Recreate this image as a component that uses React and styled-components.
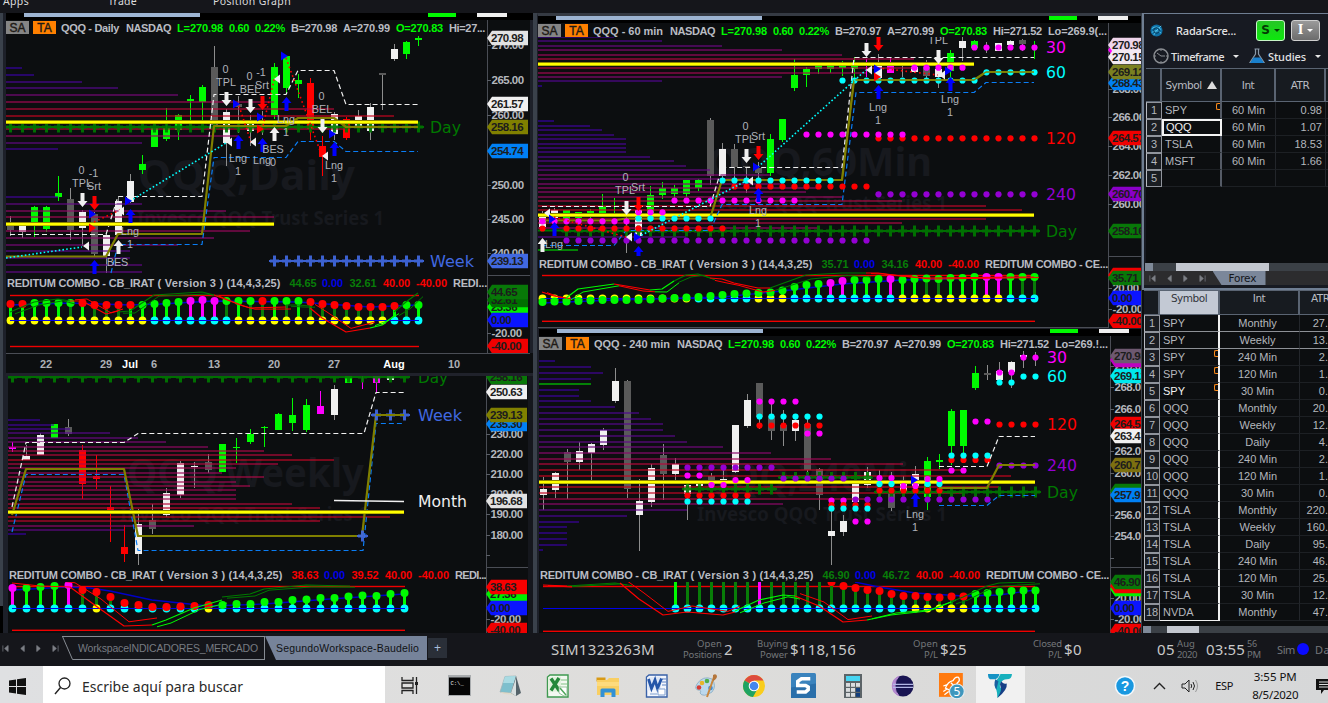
import React from "react";
import styled, { createGlobalStyle } from "styled-components";

const Global = createGlobalStyle`
  *, *::before, *::after { box-sizing: border-box; }
  html, body { margin: 0; padding: 0; background: #15161a; overflow: hidden; }
  body { font-family: "Liberation Sans", Arial, sans-serif; }
  svg { display: block; flex: none; }
`;

/* ---------- text helpers ---------- */
const SANS = '"Liberation Sans", Arial, sans-serif';
const UI = '"Noto Sans", "Open Sans", sans-serif';
const VERD = '"DejaVu Sans", Verdana, sans-serif';
const ctx = document.createElement("canvas").getContext("2d");

const FitText = styled.span`
  display: inline-block;
  flex: none;
  white-space: pre;
  width: ${(p) => (p.$w ? p.$w + "px" : "auto")};
  margin-left: ${(p) => p.$ml || 0}px;
  color: ${(p) => p.$c || "inherit"};
  font: ${(p) => p.$font};
`;
function Fit({ w, children, size = 12, weight = 400, family = SANS, c, ml }) {
  const text = String(children);
  ctx.font = `${weight} ${size}px ${family}`;
  const ls = (w - ctx.measureText(text).width) / text.length;
  return (
    <FitText $w={w} $ml={ml} $c={c} $font={`${weight} ${size}px ${family}`} style={{ letterSpacing: ls + "px" }}>
      {text}
    </FitText>
  );
}

/* ---------- palette ---------- */
const C = {
  w: "#f0f0f0", g: "#00fa00", d: "#5a5a5a", r: "#ff0000", m: "#ff00ff", c: "#00ffff",
  p: "#9400d3", y: "#ffff00", o: "#808000", b: "#0a7df5", k: "#007800", B: "#0000ff", L: "#00fa00", D: "#087d08",
  R: "#4169e1", t: "#b0b3bb",
};
const BG = "#0c0e10";

/* ---------- chart primitives ---------- */
const STOPS = [[0, 50, 0, 170], [0.3, 88, 8, 140], [0.5, 135, 8, 115], [0.75, 175, 10, 70], [1, 200, 5, 30]];
function heat(t) {
  for (let i = 1; i < STOPS.length; i++) {
    if (t <= STOPS[i][0]) {
      const a = STOPS[i - 1], b = STOPS[i], k = (t - a[0]) / (b[0] - a[0]);
      return `rgb(${[1, 2, 3].map((j) => Math.round(a[j] + (b[j] - a[j]) * k)).join(",")})`;
    }
  }
  return "rgb(200,5,30)";
}
const Profile = ({ x0, rows, max }) =>
  rows.map(([y, x, col], i) => (
    <rect key={i} x={x0} y={y - 1} width={x - x0} height={2} fill={col || heat(Math.min(1, (x - x0) / max))} opacity={0.6} />
  ));
const Candles = ({ x0, step, bars }) =>
  bars.map((b, i) => {
    const [k, o, c, h, l] = b;
    const x = x0 + step * i;
    const wick = k === "w" || k === "d" ? "#8d8d8d" : C[k];
    return (
      <g key={i}>
        <rect x={x} y={h} width={1} height={l - h} fill={wick} />
        {c > o && <rect x={x - 3} y={o} width={7} height={c - o} fill={C[k]} />}
      </g>
    );
  });
const pts = (s) => s.map((p) => p.join(",")).join(" ");
const Line = ({ p, c, w = 1, dash, o = 1 }) => (
  <polyline points={pts(p)} fill="none" stroke={C[c] || c} strokeWidth={w} strokeDasharray={dash} opacity={o} strokeLinejoin="round" />
);
const Bands = ({ white, olive, blue }) => (
  <g>
    <Line p={blue} c="b" w={1.2} dash="5 3" />
    <Line p={olive} c="o" w={2.2} />
    <Line p={white} c="w" w={1.2} dash="5 3" />
  </g>
);
const Yellow = ({ x1, x2, y }) => (
  <g>
    <rect x={x1} y={y - 2} width={x2 - x1} height={4} fill="#8f8500" />
    <rect x={x1} y={y - 1} width={x2 - x1} height={2.4} fill="#ffff00" />
  </g>
);
const Pluses = ({ x1, x2, y, c, step = 12, h = 5.5 }) => {
  const out = [];
  for (let x = x1; x <= x2; x += step) out.push(x);
  return (
    <g fill={C[c]} opacity={0.92}>
      <rect x={x1 - 5} y={y - 1} width={x2 - x1 + 11} height={2} />
      {out.map((x) => (
        <g key={x}>
          <rect x={x - 4} y={y - 1.5} width={9} height={3} />
          <rect x={x - 1} y={y - h} width={3} height={h * 2} />
        </g>
      ))}
    </g>
  );
};
const Dots = ({ rows }) =>
  rows.map(([c, y, x1, x2], k) => {
    const out = [];
    for (let x = x1; x <= (x2 || x1); x += 12) out.push(<circle key={x} cx={x + 0.5} cy={y} r={3.1} fill={C[c]} />);
    return <g key={k}>{out}</g>;
  });
const Marks = ({ items }) =>
  items.map(([k, x, y, c], i) => {
    if (k === "dn")
      return <path key={i} d={`M${x - 1.5} ${y}h4v8h3l-5 6l-5-6h3z`} fill={C[c]} />;
    if (k === "up")
      return <path key={i} d={`M${x - 1.5} ${y + 14}h4v-8h3l-5-6l-5 6h3z`} fill={C[c]} />;
    if (k === "rt") return <path key={i} d={`M${x - 3} ${y - 4.5}l7 4.5l-7 4.5z`} fill={C[c]} />;
    if (k === "lt") return <path key={i} d={`M${x + 3} ${y - 4.5}l-6 4.5l6 4.5z`} fill={C[c]} />;
    return (
      <text key={i} x={x} y={y} textAnchor="middle" fontSize={10.8} fill={C.t} fontFamily={SANS}>
        {k}
      </text>
    );
  });
const Name = ({ x, y, c, children, w }) => (
  <text x={x} y={y} fill={C[c] || c} fontFamily={VERD} fontSize={16.5} textLength={w} lengthAdjust="spacingAndGlyphs">{children}</text>
);
const Mark = ({ x, y, w, size, children }) => (
  <text x={x} y={y} textLength={w} lengthAdjust="spacingAndGlyphs" fontSize={size} fontWeight={700} fontFamily={UI} fill="#17191e">{children}</text>
);
const Combo = ({ x0, step, zero, red, tops, topC, stemC, baseC, lines, x2, from = 0, dot = 4 }) => (
  <g>
    {red.map((y) => <rect key={y} x={x0} y={y - 0.7} width={x2 - x0} height={1.4} fill="#f00000" />)}
    {tops.map((t, i) => {
      if (i < from) return null;
      const x = x0 + step * i + 0.5, k = stemC[i] || "L";
      return <rect key={i} x={x - 1.5} y={t} width={3} height={zero - t} fill={C[k]} />;
    })}
    {tops.map((t, i) => (i < from ? null : <circle key={i} cx={x0 + step * i + 0.5} cy={zero} r={3.9} fill={C[baseC[i]]} />))}
    <rect x={x0} y={zero - 0.5} width={x2 - x0} height={1} fill="#0000e8" />
    {lines.filter((l) => l[0] === "B").map((l, i) => <Line key={i} c="#0000c8" p={l[1]} w={1.3} />)}
    {tops.map((t, i) => i < from || topC[i] === "." ? null : (
      <circle key={i} cx={x0 + step * i + 0.5} cy={t} r={dot} fill={C[topC[i]]} />
    ))}
    {lines.filter((l) => l[0] !== "B").map((l, i) => (
      <g key={i}>
        <Line c={l[0]} p={l[1]} w={1.2} />
        {l[2] && <Line c={l[0]} p={l[1].map(([x, y], j) => [x + 5, y + l[2] * (j % 2 ? 1 : 0.6)])} w={1} />}
      </g>
    ))}
  </g>
);

const numW = (s) => [...s].reduce((a, ch) => a + (ch === "." ? 2.6 : ch === "-" ? 4 : 6), 0);
const AxisNum = ({ x, y, c = "#b4b7bd", children }) => (
  <text x={x} y={y + 4} fontSize={11.5} fontWeight={700} fontFamily={SANS} fill={c} textLength={numW(children)}>{children}</text>
);
const Axis = ({ x, x2, y1, y2, sep, nums, tags }) => (
  <svg width={x2 - x} height={y2 - y1} viewBox={`${x} ${y1} ${x2 - x} ${y2 - y1}`}>
    <rect x={x} y={y1} width={x2 - x} height={y2 - y1} fill={BG} />
    <rect x={x} y={y1} width={1} height={y2 - y1} fill="#4a4d55" />
    <rect x={x} y={sep} width={x2 - x} height={1} fill="#4a4d55" />
    {nums.map(([n, y]) => (
      <g key={y}>
        <rect x={x} y={y} width={4} height={1} fill="#5c6068" />
        {n && <AxisNum x={x + 4.5} y={y}>{n}</AxisNum>}
      </g>
    ))}
    {tags.map(([n, y, bg, fg = "#1c1c1c"], i) => (
      <g key={i}>
        <path d={`M${x} ${y}L${x + 5} ${y - 7.3}H${x + 41}V${y + 7.3}H${x + 5}Z`} fill={bg} />
        {n && <AxisNum x={x + 4} y={y} c={fg}>{n}</AxisNum>}
      </g>
    ))}
  </svg>
);
const Region = ({ x, x2, y1, y2, children }) => (
  <svg width={x2 - x} height={y2 - y1} viewBox={`${x} ${y1} ${x2 - x} ${y2 - y1}`}>{children}</svg>
);

/* ---------- window chrome ---------- */
const Screen = styled.div`
  width: 1328px; height: 703px; overflow: hidden; display: flex; flex-direction: column; background: #15161a;
`;
const MenuBar = styled.div`
  height: 13px; flex: none; background: #15161b; display: flex; color: #dcdcdc; overflow: hidden;
  span { margin-top: -5px; line-height: 13px; }
`;
const Desk = styled.div`height: 620px; flex: none; display: flex;`;
const Rail = styled.div`
  width: ${(p) => p.$w}px; flex: none; background: ${(p) => p.$c || "#3a414b"};
`;
const LeftEdge = styled(Rail)`
  display: flex; flex-direction: column; justify-content: flex-end; border-right: 2px solid #1d2029;
  &::after { content: ""; height: 27px; background: #000; }
`;
const Column = styled.div`
  width: ${(p) => p.$w}px; flex: none; display: flex; flex-direction: column; background: ${BG}; overflow: hidden;
`;
const ChartFrame = styled.section`
  height: ${(p) => p.$h}px; flex: none; display: flex; flex-direction: column; overflow: hidden; background: ${BG};
  border-top: ${(p) => p.$top || 0}px solid ${(p) => p.$tc || "#353a43"};
  border-left: ${(p) => p.$l}px solid #1d2029;
  border-bottom: ${(p) => p.$b || 0}px solid #20222b;
`;
const Strip = styled.div`
  height: ${(p) => p.$h}px; flex: none; background: #000; display: flex; align-items: flex-start; padding-left: 18px;
`;
const Seg = styled.i`
  width: ${(p) => p.$w}px; height: 4px; margin-left: ${(p) => p.$ml || 0}px; background: ${(p) => p.$c};
`;
const Body = styled.div`display: flex; flex: none;`;
const Stack = styled.div`width: ${(p) => p.$w}px; flex: none; display: flex; flex-direction: column;`;
const Header = styled.div`
  height: ${(p) => p.$h}px; flex: none; padding-top: 1px; display: flex; align-items: flex-start; color: #b9bcc3;
  line-height: 14px; overflow: hidden; > span { line-height: 14px; }
`;
const Flag = styled.b`
  width: 23px; height: 13px; flex: none; margin-right: 4px; background: ${(p) => p.$c}; color: #1e1a16;
  font: 400 12px/14px ${SANS}; text-align: center; -webkit-text-stroke: 0.4px #1e1a16;
`;
const StudyRow = styled.div`
  height: ${(p) => p.$h}px; flex: none; display: flex; align-items: flex-start; padding-left: 1px; color: #b9bcc3; overflow: hidden;
  > span { line-height: ${(p) => p.$lh || 14}px; }
`;
const Q = (p) => <Fit size={11} weight={700} {...p} />;

function QuoteHeader({ h, name, nameW, bid = "B=270.97", tail }) {
  return (
    <Header $h={h}>
      <Flag $c="#858585">SA</Flag>
      <Flag $c="#ff8000">TA</Flag>
      <Q w={nameW} ml={1}>{name}</Q>
      <Q w={45} ml={7}>NASDAQ</Q>
      <Q w={46} ml={6} c={C.g}>L=270.98</Q>
      <Q w={20} ml={6} c={C.g}>0.60</Q>
      <Q w={30} ml={6} c={C.g}>0.22%</Q>
      <Q w={46} ml={6}>{bid}</Q>
      <Q w={47} ml={6}>A=270.99</Q>
      <Q w={47} ml={6} c={C.g}>O=270.83</Q>
      {tail}
    </Header>
  );
}
function StudyTitle({ h, lh, a, b, ac, bc, tail, tailW }) {
  return (
    <StudyRow $h={h} $lh={lh}>
      <Q w={147}>REDITUM COMBO - CB_IRAT</Q>
      <Q w={66} ml={3.5}>( Version 3 )</Q>
      <Q w={54} ml={3}>(14,4,3,25)</Q>
      <Q w={27} ml={9} c={ac}>{a}</Q>
      <Q w={21} ml={5.5} c="#0000e8">0.00</Q>
      <Q w={27} ml={6.5} c={bc}>{b}</Q>
      <Q w={27} ml={6.5} c="#fa0000">40.00</Q>
      <Q w={31} ml={6} c="#fa0000">-40.00</Q>
      <Q w={tailW} ml={6}>{tail}</Q>
    </StudyRow>
  );
}
const TopStrip = ({ h, a, b, c }) => (
  <Strip $h={h}>
    <Seg $w={a} $c="#9db4d2" />
    <Seg $w={28} $ml={b} $c="#00fa00" />
    <Seg $w={30} $ml={c} $c="#efefef" />
  </Strip>
);

/* ---------- Daily ---------- */
const dailyBars = [
  ["d", 225, 230, 216, 236], ["w", 225, 232, 224, 238], ["g", 207, 226, 206, 237], ["g", 207, 229, 206, 232], ["g", 193, 197, 176, 201],
  ["d", 199, 230, 188, 240], ["w", 212, 228, 210, 246], ["d", 214, 254, 212, 256], ["w", 235, 256, 233, 273], ["w", 201, 235, 197, 235],
  ["w", 181, 202, 174, 203], ["g", 164, 170, 155, 174], ["g", 128, 147, 128, 147], ["g", 128, 139, 108, 141], ["g", 115, 130, 114, 140],
  ["g", 99, 101, 95, 121], ["g", 87, 102, 85, 121], ["d", 67, 125, 46, 130], ["w", 112, 143, 109, 166], ["d", 104, 107, 96, 133],
  ["w", 124, 131, 115, 146], ["d", 116, 116, 111, 135], ["g", 67, 115, 63, 119], ["g", 56, 88, 56, 93], ["g", 80, 84, 74, 98],
  ["r", 83, 129, 78, 140], ["r", 146, 157, 136, 176], ["w", 114, 134, 112, 140], ["r", 119, 138, 117, 140], ["w", 116, 126, 110, 127],
  ["w", 107, 131, 103, 140], ["d", 73, 75, 73, 110], ["w", 49, 59, 44, 61], ["g", 42, 54, 41, 59], ["g", 38, 40, 34, 46],
];
const dailyProfile = [
  [68, 22], [75, 34], [82, 82], [88, 118], [95, 178], [102, 274], [109, 334], [116, 394], [129, 346], [136, 238], [143, 142], [149, 58],
  [197, 58], [204, 142], [211, 226], [217, 274], [231, 250], [238, 214], [245, 178], [251, 130], [258, 130], [265, 142], [272, 142],
];
function Daily() {
  return (
    <ChartFrame $h={363} $l={1} $b={3}>
      <TopStrip h={7} a={176} b={228} c={21} />
      <Body>
        <Stack $w={481}>
          <QuoteHeader h={16} name="QQQ - Daily" nameW={58} bid="B=270.98" tail={<Q w={36} ml={6}>Hi=27...</Q>} />
          <Region x={6} x2={487} y1={36} y2={275}>
            <Mark x={138} y={190} w={217} size={41}>QQQ,Daily</Mark>
            <Mark x={137} y={225} w={247} size={20}>Invesco QQQ Trust Series 1</Mark>
            <Candles x0={10} step={12} bars={dailyBars} />
            <Profile x0={6} rows={dailyProfile} max={390} />
            <Pluses x1={10} x2={418} y={127} c="k" />
            <Pluses x1={274} x2={418} y={261} c="R" />
            <Bands
              white={[[10, 234.5], [106, 234.5], [118, 196.5], [202, 196.5], [214, 94.5], [286, 94.5], [298, 70.5], [334, 70.5], [346, 104.5], [419, 104.5]]}
              olive={[[6, 256.5], [106, 256.5], [118, 234], [202, 234], [214, 126], [286, 126], [298, 118], [334, 118], [346, 127], [418, 127]]}
              blue={[[111, 273], [118, 244.5], [202, 244.5], [214, 157.5], [286, 157.5], [298, 141.5], [334, 141.5], [346, 151.5], [418, 151.5]]}
            />
            <Yellow x1={6} x2={274} y={224} />
            <Yellow x1={6} x2={418} y={122} />
            <Line p={[[6, 258], [82, 247]]} c="c" w={1.6} dash="1.6 2.2" />
            <Line p={[[130, 201], [226, 143]]} c="c" w={1.6} dash="1.6 2.2" />
            {[[[94, 222], [120, 210]], [[239, 106], [251, 142]], [[262, 130], [275, 76]], [[286, 58], [322, 156]]].map((p, i) => <Line key={i} p={p} c="r" w={1.6} dash="1.6 3" />)}
            <Marks items={[
              ["dn", 226, 92, "w"], ["dn", 250, 99, "w"], ["dn", 322, 119, "w"], ["dn", 82, 193, "w"], ["dn", 262, 96, "r"], ["dn", 94, 196, "r"],
              ["up", 238, 135, "B"], ["up", 262, 138, "B"], ["up", 286, 97, "B"], ["up", 334, 142, "B"], ["up", 94, 260, "B"], ["up", 130, 209, "B"],
              ["up", 274, 127, "w"], ["up", 118, 240, "w"], ["rt", 236, 104, "B"], ["rt", 260, 117, "B"], ["rt", 92, 214, "B"], ["rt", 128, 201, "B"], ["rt", 284, 56, "B"], ["rt", 332, 134, "B"],
              ["lt", 229, 142, "w"], ["lt", 253, 142, "w"], ["lt", 277, 79, "w"], ["lt", 325, 156, "w"], ["lt", 86, 246, "w"], ["lt", 121, 211, "w"], ["rt", 260, 129, "r"], ["rt", 92, 228, "r"],
              ["0", 225.5, 73], ["TPL", 226, 86], ["0", 249.5, 80], ["-1", 261, 76], ["Srt", 262, 89], ["BEL", 250, 93], ["BES", 273, 153], ["Lng", 238, 162], ["1", 238, 175],
              ["Lng", 262, 164], ["0", 273, 166], ["Lng", 286, 123], ["1", 286, 136], ["0", 321.5, 100], ["BEL", 322, 113], ["Lng", 334, 169], ["1", 334, 182],
              ["0", 81.5, 174], ["TPL", 82, 187], ["-1", 93.5, 177], ["Srt", 94, 190], ["Lng", 130, 235], ["1", 130, 248], ["BES", 117.5, 266],
            ]} />
            <Name x={430} y={133} c="k" w={31}>Day</Name>
            <Name x={430} y={267} c="R" w={44}>Week</Name>
          </Region>
          <StudyTitle h={15} lh={16} a="44.65" b="32.61" ac="#087d08" bc="#087d08" tail="REDI..." tailW={34} />
          <Region x={6} x2={487} y1={290} y2={353}>
            <Combo x0={10} step={12} zero={320.5} red={[295.5, 346.5]} x2={419}
              tops={[304, 304, 303, 303, 303, 303, 303, 305, 305, 305, 305, 305, 304, 303, 302, 301, 300, 301, 301, 301, 301, 301, 301, 301, 301, 302, 304, 305, 306, 307, 307, 307, 306, 305, 305]}
              topC="rrggggrrrrrggggmmmgggrgggrrrrrrrrgg"
              stemC="LLLLLDLDDDLLLLLmmmDLDDLDLDDDDDDDLDL"
              baseC="yyyyyyyyyyyycccccccyyyyyyyyyyyyyccc"
              lines={[
                ["B", [[10, 305], [70, 303], [130, 305], [160, 304], [214, 301], [298, 302], [370, 307], [418, 305]]],
                ["k", [[10, 312], [34, 302], [58, 299], [70, 301]], 3], ["r", [[70, 301], [82, 301], [106, 314], [118, 311]], -2], ["k", [[118, 312], [130, 311], [154, 295], [202, 292], [214, 295]], 2],
                ["r", [[214, 295], [238, 304], [250, 308], [286, 307]], 2], ["k", [[286, 305], [298, 305], [310, 306]], 2], ["r", [[310, 308], [322, 318], [346, 332], [370, 328]], -6], ["L", [[370, 328], [382, 325], [394, 316]], -4], ["k", [[394, 312], [406, 302], [418, 293]], 6],
              ]} />
          </Region>
        </Stack>
        <Axis x={487} x2={530} y1={20} y2={353} sep={275}
          nums={[["270.00", 45], ["265.00", 80], ["260.00", 115], ["250.00", 185], ["245.00", 219], ["240.00", 253], ["-20.00", 333]]}
          tags={[["270.98", 38, "#e2e2e2"], ["261.57", 104, "#f0f0f0"], ["258.16", 127, "#808000"], ["254.74", 151, "#0080f5"], ["239.13", 261, "#4169e1"],
            ["23.36", 307, "#00f000"], ["32.61", 300, "#006f00"], ["44.65", 292, "#087808"], ["0.00", 320, "#0a14ff"], ["-40.00", 346, "#f00000"]]} />
        <Rail $w={3} $c="#1d2029" />
      </Body>
      <TimeAxis />
    </ChartFrame>
  );
}
const TimeRow = styled.div`
  height: 20px; width: 524px; border-top: 1px solid #4a4d55; display: flex; flex: none; padding-left: 28px;
`;
const Tick = styled.span`
  width: 24px; flex: none; margin-left: ${(p) => p.$ml || 0}px; text-align: center; font: 700 11px/21px ${SANS}; color: ${(p) => (p.$hot ? "#fff" : "#aeb1b7")};
`;
const TimeAxis = () => (
  <TimeRow>
    {[["22", 0], ["29", 36], ["Jul", 0, 1], ["6", 0], ["13", 36], ["20", 36], ["27", 36], ["Aug", 36, 1], ["10", 36]].map(([t, ml, hot]) => (
      <Tick key={t} $ml={ml} $hot={hot}>{t}</Tick>
    ))}
  </TimeRow>
);

/* ---------- Weekly ---------- */
const weeklyBars = [
  ["m", 447, 449, 442, 452], ["w", 456, 460, 445, 460], ["w", 435, 455, 433, 455], ["g", 424, 438, 424, 438], ["d", 427, 434, 419, 436],
  ["r", 450, 484, 445, 499], ["r", 476, 479, 455, 489], ["r", 507, 511, 486, 542], ["r", 547, 554, 525, 562], ["w", 524, 554, 509, 565],
  ["d", 520, 529, 504, 534], ["w", 493, 515, 488, 517], ["w", 463, 495, 461, 498], ["w", 466, 467, 462, 488], ["d", 462, 470, 454, 473],
  ["g", 444, 472, 444, 472], ["g", 447, 448, 438, 463], ["g", 434, 442, 429, 444], ["g", 427, 428, 426, 447], ["g", 414, 430, 413, 430],
  ["g", 415, 423, 398, 431], ["g", 405, 430, 399, 432], ["m", 406, 414, 391, 414], ["w", 389, 415, 385, 420], ["g", 376, 383, 376, 383],
  ["m", 380, 380, 376, 389], ["m", 376, 383, 376, 392], ["w", 376, 380, 376, 380],
];
const weeklyProfile = [
  [420, 40], [425, 54], [429, 70], [433, 110], [438, 138], [442, 166], [447, 208], [451, 264], [455, 292], [460, 334], [464, 278], [468, 236], [473, 222], [477, 264],
  [482, 236], [486, 250], [490, 236], [495, 236], [499, 236], [504, 292], [508, 320], [517, 390], [521, 320], [526, 194], [530, 124], [534, 26],
];
function Weekly() {
  return (
    <ChartFrame $h={257} $l={3}>
      <Body>
        <Stack $w={478}>
          <Region x={8} x2={486} y1={376} y2={567}>
            <Mark x={127} y={487} w={237} size={39}>QQQ,Weekly</Mark>
            <Mark x={120} y={521} w={248} size={19}>Invesco QQQ Trust Series 1</Mark>
            <Candles x0={12} step={14} bars={weeklyBars} />
            <Profile x0={8} rows={weeklyProfile} max={340} />
            <Pluses x1={12} x2={404} y={377} c="k" step={14} />
            <Bands
              white={[[12, 507], [26, 442.5], [124, 442.5], [138, 433.5], [364, 433.5], [376, 392.5], [404, 392.5]]}
              olive={[[12, 515], [26, 469], [124, 469], [138, 536], [362, 536], [376, 415], [404, 415]]}
              blue={[[12, 532], [26, 474.5], [124, 474.5], [138, 550.5], [363, 550.5], [376, 423.5], [404, 423.5]]}
            />
            <Pluses x1={376} x2={404} y={415} c="R" step={14} />
            <Pluses x1={362} x2={362} y={536} c="R" />
            <Line p={[[376, 415], [404, 415]]} c="o" w={2} />
            <Yellow x1={8} x2={404} y={512} />
            <Line p={[[334, 500.5], [404, 501.5]]} c="w" w={1.3} />
            <Name x={418} y={383} c="k" w={30}>Day</Name>
            <Name x={418} y={421} c="R" w={44}>Week</Name>
            <Name x={418} y={507} c="w" w={49}>Month</Name>
          </Region>
          <StudyTitle h={15} lh={17} a="38.63" b="39.52" ac="#fa0000" bc="#fa0000" tail="REDI..." tailW={31} />
          <Region x={8} x2={486} y1={582} y2={633}>
            <Combo x0={12} step={14} zero={608.5} red={[586.5, 630.3]} x2={405}
              tops={[588, 588, 587, 586, 585, 590, 592, 597, 603, 605, 607, 607, 606.5, 606, 605, 605, 604, 604, 602, 602, 600, 599.5, 598, 598, 596.5, 595.5, 596, 594, 593]}
              topC="mgggmrrrrrrrrrrgggggggggggggg" stemC="mLLLmDDDDDDLLLLLLLLLLLLLLLLLL" baseC="ccccccycccccccyccccccccccccccc"
              lines={[
                ["B", [[12, 590], [68, 587], [90, 588], [110, 591], [152, 600], [208, 606], [264, 604], [330, 599], [404, 594]]],
                ["r", [[12, 583], [40, 586], [70, 587], [96, 606], [124, 626], [152, 625]], -7], ["L", [[152, 625], [166, 620], [194, 608], [222, 600]], 3], ["k", [[222, 597], [250, 594], [264, 589], [306, 585], [350, 586]], 2],
              ]} />
          </Region>
        </Stack>
        <Axis x={486} x2={528} y1={376} y2={633} sep={567}
          nums={[["230.00", 434], ["220.00", 454], ["210.00", 474], ["200.00", 494], ["190.00", 514], ["180.00", 535], ["", 555], ["-20.00", 619]]}
          tags={[["258.16", 377, "#087808"], ["250.63", 392, "#f0f0f0"], ["235.30", 424, "#0080f5"], ["239.13", 415, "#808000"], ["196.68", 501, "#e2e2e2"],
            ["27.36", 594, "#00f000"], ["38.63", 587, "#f80000"], ["0.00", 608, "#0a14ff"], ["-40.00", 630, "#f00000"]]} />
        <Rail $w={5} $c="#15171d" />
      </Body>
    </ChartFrame>
  );
}

/* ---------- 60 min ---------- */
const hourBars = [
  ["w", 216, 227, 211, 230], ["w", 210, 218, 208, 222], ["g", 210, 220, 210, 220], ["g", 212, 218, 212, 218], ["g", 211, 214, 209, 218], ["g", 206, 213, 194, 215],
  ["g", 200, 200, 198, 213], ["d", 210, 210, 205, 253], ["w", 210, 236, 210, 240], ["g", 195, 220, 186, 222], ["g", 188, 195, 182, 199], ["g", 188, 194, 185, 198],
  ["g", 180, 194, 180, 197], ["g", 180, 188, 179, 191], ["d", 120, 176, 118, 185], ["w", 149, 176, 143, 178], ["d", 149, 167, 144, 178], ["d", 166, 167, 166, 193],
  ["d", 168, 173, 162, 178], ["g", 139, 173, 134, 176], ["g", 119, 140, 119, 142], ["g", 75, 88, 59, 91], ["g", 69, 75, 67, 87], ["g", 66, 69, 65, 74],
  ["g", 65, 69, 64, 73], ["g", 62, 68, 61, 76], ["g", 62, 69, 57, 81], ["m", 65, 66, 59, 77], ["w", 65, 78, 54, 79], ["m", 65, 73, 58, 73],
  ["d", 70, 70, 66, 77], ["w", 67, 72, 67, 73], ["d", 67, 76, 60, 79], ["w", 69, 77, 69, 88], ["g", 53, 71, 50, 85], ["w", 41, 48, 37, 61],
  ["g", 41, 48, 40, 48], ["d", 45, 45, 42, 53], ["w", 43, 51, 43, 51], ["w", 41, 45, 40, 48], ["d", 40, 44, 39, 51], ["g", 45, 45, 41, 59],
];
const hourProfile = [
  [37, 614], [41, 662], [46, 722], [50, 782], [55, 842], [59, 914], [68, 914], [73, 866], [77, 782], [81, 662], [86, 542], [121, 554], [126, 590], [130, 602], [135, 614],
  [139, 626], [144, 626], [148, 626], [152, 626], [157, 650], [161, 674], [166, 686], [170, 710], [175, 770], [179, 746], [184, 782], [188, 818], [192, 806], [197, 842],
  [201, 902], [206, 986], [210, 1022], [219, 986], [223, 902], [228, 818], [237, 686], [250, 578, "#00d000"],
];
function Hourly() {
  return (
    <ChartFrame $h={315} $l={1} $top={3}>
      <TopStrip h={7} a={206} b={287} c={21} />
      <Body>
        <Stack $w={570}>
          <QuoteHeader h={14} name="QQQ - 60 min" nameW={70} tail={<><Q w={49} ml={6}>Hi=271.52</Q><Q w={59} ml={6}>Lo=269.9(...</Q></>} />
          <Region x={538} x2={1108} y1={37} y2={256}>
            <Mark x={708} y={176} w={224} size={39}>QQQ,60Min</Mark>
            <Mark x={697} y={210} w={250} size={19}>Invesco QQQ Trust Series 1</Mark>
            <Candles x0={542} step={12} bars={hourBars} />
            <Profile x0={538} rows={hourProfile} max={480} />
            <Pluses x1={566} x2={1034} y={231} c="k" />
            <Line p={[[538, 230.5], [566, 230.5]]} c="k" w={2} />
            <Yellow x1={538} x2={1034} y={215} />
            <Yellow x1={538} x2={974} y={64} />
            <Bands
              white={[[542, 206.5], [710, 206.5], [722, 167.5], [842, 167.5], [854, 57.5], [1034, 57.5]]}
              olive={[[542, 220.5], [614, 220.5], [626, 218.5], [710, 218.5], [722, 180], [842, 180], [854, 80], [974, 80], [986, 72], [1034, 72]]}
              blue={[[542, 245.5], [614, 245.5], [626, 230.5], [710, 230.5], [722, 204.5], [842, 204.5], [856, 92.5], [974, 92.5], [986, 82.5], [1034, 82.5]]}
            />
            <Dots rows={[
              ["m", 47.5, 974, 1034], ["m", 67.7, 914, 962], ["c", 80.5, 842, 974], ["c", 72.3, 986, 1034], ["r", 138.3, 878, 1034], ["m", 134.5, 806, 902],
              ["p", 194.3, 878, 1034], ["r", 186.5, 734, 866], ["c", 180.5, 722, 830], ["m", 200.5, 674, 794], ["m", 212.3, 638, 662], ["m", 221.3, 542, 626],
              ["c", 218.5, 638, 710], ["r", 228.5, 566, 722], ["r", 228.5, 542], ["p", 240.5, 566, 866],
            ]} />
            <Line p={[[842, 180], [854, 80], [974, 80], [986, 72], [1034, 72]]} c="o" w={1.4} />
            <Line p={[[638, 237], [746, 181]]} c="c" w={1.6} dash="1.6 2.2" />
            <Line p={[[758, 167], [866, 70]]} c="c" w={1.6} dash="1.6 2.2" />
            <Line p={[[554, 217], [626, 237]]} c="r" w={1.6} dash="1.6 3" />
            <Line p={[[878, 68], [938, 75]]} c="r" w={1.6} dash="1.6 3" />
            <Marks items={[
              ["dn", 626, 201, "w"], ["dn", 638, 197, "r"], ["dn", 746, 149, "w"], ["dn", 758, 146, "r"], ["dn", 878, 37, "r"], ["dn", 866, 43, "w"], ["dn", 938, 50, "w"],
              ["up", 758, 188, "B"], ["up", 878, 85, "B"], ["up", 950, 77, "B"], ["up", 638, 246, "B"], ["up", 554, 222, "B"], ["up", 542, 238, "w"],
              ["lt", 547, 213, "w"], ["rt", 552, 219, "B"], ["lt", 629, 237, "w"], ["rt", 637, 237, "B"], ["lt", 750, 181, "w"], ["rt", 756, 167, "B"], ["lt", 869, 70, "w"], ["rt", 877, 69, "B"], ["rt", 877, 77, "r"], ["rt", 948, 71, "B"], ["lt", 942, 75, "w"],
              ["0", 625.5, 181], ["TPL", 625, 194], ["Srt", 638, 191], ["0", 745.5, 130], ["TPL", 745, 143], ["Srt", 758, 140], ["Lng", 758, 214], ["1", 758, 227],
              ["Lng", 878, 111], ["1", 878, 124], ["Lng", 950, 103], ["1", 950, 116], ["TPL", 938, 44], ["Lng", 554, 248],
            ]} />
            <Name x={1046} y={53} c="m" w={20}>30</Name>
            <Name x={1046} y={78} c="c" w={20}>60</Name>
            <Name x={1046} y={144} c="r" w={30}>120</Name>
            <Name x={1046} y={200} c="p" w={30}>240</Name>
            <Name x={1046} y={237} c="k" w={31}>Day</Name>
          </Region>
          <StudyTitle h={15} lh={17} a="35.71" b="34.16" ac="#087d08" bc="#087d08" tail="REDITUM COMBO - CE..." tailW={123} />
          <Region x={538} x2={1108} y1={271} y2={328}>
            <Combo x0={542} step={12} zero={298.5} red={[275.5, 321.3]} x2={1035}
              tops={[302, 301.5, 301.5, 301, 300.5, 300, 300, 300, 300, 299.5, 298.5, 298, 297.5, 297, 296, 295, 294, 293.5, 293, 292.5, 290.5, 287, 285, 284, 283, 281, 280, 280, 279, 279, 280, 279, 278.5, 279, 278, 278, 277, 277, 277, 277, 277, 277]}
              topC="ggggggggggggggggggggggggmmgggmgggggggmmggg" stemC="LLLLLLLLLLLLLLLLLLLLLLLLmmLLLmLLDDLLLmmLDD" baseC="yyyyyyyyyyyyycccccyyycccccccccyyyyyyyyyccc"
              lines={[
                ["B", [[542, 303], [614, 300], [722, 297], [782, 291], [842, 284], [902, 280], [1034, 277]]],
                ["r", [[542, 292], [554, 296], [566, 298]], 1], ["L", [[566, 298], [578, 289], [614, 284]], 3], ["r", [[614, 284], [638, 288], [650, 290]], 3], ["L", [[650, 290], [662, 289], [674, 281]], 3], ["k", [[674, 281], [686, 275], [698, 274], [710, 278]], 2],
                ["r", [[710, 278], [722, 279], [734, 283], [758, 288], [770, 288]], 4], ["k", [[770, 288], [806, 275], [842, 273], [866, 273]], 4], ["r", [[866, 273], [878, 273], [902, 276], [926, 278], [1034, 277]], 1],
              ]} />
            <rect x={538} y={327} width={570} height={1} fill="#4a4d55" />
          </Region>
        </Stack>
        <Axis x={1108} x2={1141} y1={23} y2={328} sep={256}
          nums={[["268.00", 89], ["266.00", 117], ["264.00", 146], ["262.00", 175], ["260.00", 204], ["20.00", 288], ["-20.00", 309]]}
          tags={[["", 50, "#ff00ff"], ["270.98", 45, "#eed4ea"], ["270.15", 57, "#f2eaf2"], ["268.43", 83, "#0080f5"], ["269.12", 72, "#7a8020"], ["264.57", 138, "#f00000"], ["260.70", 194, "#8a00c8"], ["258.16", 231, "#087808"],
            ["", 275, "#f00000"], ["35.71", 278, "#087808"], ["0.00", 298, "#0a14ff"], ["-40.00", 321, "#f00000"]]} />
      </Body>
    </ChartFrame>
  );
}

/* ---------- 240 min ---------- */
const fourBars = [
  ["w", 489, 495, 477, 510], ["w", 473, 490, 472, 498], ["d", 452, 462, 449, 499], ["w", 451, 462, 442, 470], ["w", 444, 453, 443, 481], ["w", 430, 445, 428, 450],
  ["w", 381, 401, 368, 403], ["d", 381, 489, 380, 498], ["w", 501, 515, 479, 551], ["w", 468, 502, 464, 507], ["d", 455, 474, 444, 500], ["w", 464, 474, 458, 480],
  ["w", 485, 494, 483, 520], ["w", 482, 486, 480, 488], ["d", 476, 485, 473, 487], ["w", 479, 484, 470, 485], ["w", 425, 472, 425, 473], ["w", 400, 426, 394, 428],
  ["d", 383, 417, 383, 429], ["d", 416, 431, 403, 440], ["d", 425, 431, 410, 446], ["w", 420, 431, 415, 441], ["d", 424, 470, 415, 472], ["d", 469, 495, 468, 510],
  ["w", 531, 536, 510, 565], ["w", 521, 532, 515, 536], ["w", 483, 502, 480, 502], ["w", 472, 485, 467, 488], ["d", 478, 478, 470, 500], ["d", 492, 508, 472, 511],
  ["w", 482, 491, 476, 493], ["w", 474, 486, 466, 486], ["g", 461, 497, 457, 510], ["g", 460, 462, 454, 469], ["g", 411, 446, 409, 465], ["g", 410, 446, 410, 455],
  ["g", 373, 388, 366, 390], ["d", 373, 375, 365, 380], ["w", 371, 380, 362, 380], ["w", 362, 372, 361, 388], ["w", 355, 357, 350, 368], ["d", 357, 357, 352, 366],
];
const fourProfile = [
  [361, 555], [367, 591], [373, 603], [379, 591], [384, 591, "#00d000"], [390, 579], [396, 579], [401, 591], [407, 615], [413, 639], [419, 651], [424, 663], [430, 663],
  [436, 675], [442, 687], [447, 723], [453, 771], [459, 831], [464, 903], [470, 963], [476, 1011], [487, 999], [493, 963], [499, 867], [504, 783], [510, 687], [516, 627],
  [522, 579], [527, 567], [533, 567], [539, 567], [545, 567], [550, 543],
];
function FourHour() {
  return (
    <ChartFrame $h={305} $l={2} $top={1} $tc="#20222b">
      <TopStrip h={7} a={206} b={287} c={21} />
      <Body>
        <Stack $w={571}>
          <QuoteHeader h={15} name="QQQ - 240 min" nameW={76} tail={<><Q w={49} ml={6}>Hi=271.52</Q><Q w={53} ml={6}>Lo=269.!...</Q></>} />
          <Region x={539} x2={1110} y1={351} y2={567}>
            <Mark x={700} y={491} w={233} size={39}>QQQ,240Min</Mark>
            <Mark x={697} y={521} w={250} size={19}>Invesco QQQ Trust Series 1</Mark>
            <Candles x0={543} step={12} bars={fourBars} />
            <Profile x0={539} rows={fourProfile} max={440} />
            <Pluses x1={687} x2={771} y={489} c="k" />
            <Pluses x1={783} x2={867} y={477.5} c="k" />
            <Pluses x1={879} x2={1035} y={492} c="k" />
            <Yellow x1={539} x2={1035} y={482} />
            <Dots rows={[
              ["m", 401.5, 759, 795], ["c", 416.5, 759, 819], ["r", 425.5, 759, 819], ["m", 433.5, 807, 819], ["p", 467.5, 687, 771], ["m", 475.5, 687, 699], ["m", 485, 711, 723],
              ["m", 480, 735, 747], ["r", 495.5, 687, 747], ["c", 501.5, 687, 747], ["p", 478.5, 783, 843], ["m", 500.5, 831, 843], ["r", 505, 831, 867], ["c", 508.5, 831, 867],
              ["m", 521.5, 855, 867], ["p", 499.5, 855, 903], ["p", 499.5, 927, 987], ["m", 478, 879, 891], ["c", 484, 879, 891], ["c", 484, 927, 939], ["r", 490.5, 879, 939],
              ["m", 486, 903, 915], ["m", 479, 927, 939], ["r", 460, 951, 987], ["c", 455.5, 951, 987], ["m", 470.5, 951, 963], ["m", 421.5, 975, 987], ["r", 424.5, 999, 1035],
              ["p", 465.5, 999, 1035], ["m", 372.5, 999, 1011], ["c", 382.5, 999, 1011], ["m", 357.5, 1023, 1035], ["c", 376.5, 1023, 1035],
            ]} />
            <Bands
              white={[[939, 466.5], [987, 466.5], [999, 436.5], [1035, 436.5]]}
              olive={[[939, 488], [987, 488], [999, 465], [1035, 465]]}
              blue={[[939, 505.5], [987, 505.5], [999, 495.5], [1035, 495.5]]}
            />
            <Marks items={[["rt", 914, 480, "B"], ["up", 915, 493, "B"], ["Lng", 915, 518], ["1", 915, 531]]} />
            <Name x={1047} y={363} c="m" w={20}>30</Name>
            <Name x={1047} y={382} c="c" w={20}>60</Name>
            <Name x={1047} y={430} c="r" w={30}>120</Name>
            <Name x={1047} y={471} c="p" w={30}>240</Name>
            <Name x={1047} y={498} c="k" w={31}>Day</Name>
          </Region>
          <StudyTitle h={15} lh={17} a="46.90" b="46.72" ac="#087d08" bc="#087d08" tail="REDITUM COMBO - CE..." tailW={123} />
          <Region x={539} x2={1110} y1={582} y2={633}>
            <Combo x0={543} step={12} zero={608.5} red={[586.5, 631.3]} x2={1035} from={11}
              tops={[...Array(24).fill(582), 582, 586, 588, 590, 591, 594, 596, 596, 597, 597.5, 596.5, 596.5, 594, 593, 592, 591, 590.5, 590.5]}
              topC="........................rrrrrrrrrrrrgggggg" stemC="...........LDDDDDDmDDDDDDDDDDDDDDDDDLLLLLL" baseC="...........ccccccccccccccccccccyyyyycccccc"
              lines={[
                ["B", [[855, 582], [879, 587], [915, 593], [963, 596], [999, 595], [1035, 590]]],
                ["k", [[567, 586], [615, 583], [627, 585]], 1], ["r", [[543, 585], [567, 586]], 1], ["r", [[620, 583], [639, 599], [663, 615], [687, 612], [723, 615], [735, 612]], -6],
                ["L", [[735, 611], [759, 600], [783, 595], [795, 596]], 3], ["r", [[795, 596], [819, 606], [843, 622], [867, 620]], -4], ["L", [[867, 620], [891, 615], [927, 611], [951, 602]], -2], ["k", [[951, 602], [963, 597], [987, 586], [999, 583], [1035, 582]], 3],
              ]} />
          </Region>
        </Stack>
        <Axis x={1110} x2={1141} y1={336} y2={633} sep={567}
          nums={[["270.00", 366], ["268.00", 387], ["266.00", 409], ["262.00", 451], ["260.00", 473], ["256.00", 515], ["254.00", 536], ["", 558], ["20.00", 598], ["-20.00", 619]]}
          tags={[["", 360, "#c000c0"], ["270.98", 356, "#6d5870"], ["269.12", 376, "#00e8ee"], ["264.57", 424, "#f00000"], ["263.41", 436, "#f0f0f0"], ["260.70", 465, "#7c7010"], ["", 491, "#087808"], ["257.91", 495, "#0080f5"],
            ["", 589, "#00f000"], ["", 586, "#f00000"], ["46.90", 582, "#087808"], ["0.00", 608, "#0a14ff"], ["-40.00", 631, "#f00000"]]} />
      </Body>
    </ChartFrame>
  );
}

/* ---------- Radar ---------- */
const Radar = styled.aside`width: 186px; flex: none; display: flex; flex-direction: column; overflow: hidden; background: ${BG};`;
const RadarWindow = styled.div`
  height: 277px; flex: none; border-left: 2px solid #6f7e92; border-bottom: 2px solid #6f7e92; border-top: 1px solid #6f7e92;
  background: #171a22; display: flex; flex-direction: column;
`;
const TitleRow = styled.div`height: 32px; flex: none; display: flex; align-items: center; padding-left: 6px; color: #e6e6e6;`;
const LinkBtn = styled.div`
  width: 29px; height: 21px; margin-left: ${(p) => p.$ml}px; border-radius: 3px; border: 1px solid ${(p) => (p.$on ? "#c8f5c8" : "#cfcfcf")};
  background: ${(p) => (p.$on ? "linear-gradient(#26c526,#0de80d)" : "linear-gradient(#9a9a9a,#6c6c6c)")};
  display: flex; align-items: center; justify-content: center; gap: 4px; font: 700 12px/18px ${(p) => (p.$on ? VERD : '"DejaVu Serif", serif')}; color: ${(p) => (p.$on ? "#043a04" : "#fff")};
`;
const Caret = styled.i`border: 3px solid transparent; border-top-color: ${(p) => p.$c || "#e8e8e8"}; border-bottom: 0; margin-left: ${(p) => p.$ml || 0}px; flex: none;`;
const ToolRow = styled.div`height: 20px; margin-bottom: 2px; flex: none; display: flex; align-items: center; padding-left: 9px; color: #e2e2e2;`;
const FlaskIcon = styled.svg`margin-left: 10px;`;
const Grid = styled.div`
  margin-left: ${(p) => p.$ml}px; display: grid; grid-template-columns: ${(p) => p.$cols}; flex: none; background: ${BG};
  grid-template-rows: ${(p) => p.$head}px; grid-auto-rows: 17px; overflow: hidden; height: ${(p) => p.$h}px;
`;
const HeadCell = styled.div`
  background: ${(p) => (p.$on ? "#c3c9d4" : "#171b20")}; color: ${(p) => (p.$on ? "#33363c" : "#b9bcc2")}; border: 1px solid #5a6472; border-width: 1px 2px 1px 0;
  display: flex; align-items: center; justify-content: ${(p) => (p.$pl ? "flex-start" : "center")}; font: 400 10.5px ${VERD}; letter-spacing: -0.5px; white-space: nowrap; padding-bottom: ${(p) => p.$pb || 0}px;
  padding-left: ${(p) => p.$pl || 0}px; overflow: hidden;
`;
const Sort = styled.i`border: 5px solid transparent; border-bottom: 8px solid #dcdcdc; border-top: 0; margin-left: 5px;`;
const IndexCell = styled.div`
  border: 1.5px solid #90949c; border-left-color: #b9bcc2; background: #1a1d22; color: #b4b7bd; font: 400 11px/14px ${SANS}; text-align: center; letter-spacing: -0.2px;
`;
const Cell = styled.div`
  border-right: ${(p) => (p.$bar ? "2px solid " + p.$bar : "1px solid #23262b")}; border-bottom: 1px solid ${(p) => p.$line || "#1d2024"};
  color: ${(p) => (p.$hot ? "#f2f2f2" : "#b4b7bd")}; font: 400 11px/17px ${SANS}; text-align: ${(p) => p.$a || "left"}; white-space: nowrap;
  padding: 0 ${(p) => p.$pr || 3}px 0 3px; position: relative; overflow: hidden;
  ${(p) => p.$box && "border: 2px solid #f4f4f4; line-height: 13px; padding-left: 2px;"}
`;
const Corner = styled.i`
  position: absolute; right: 0; top: 1px; width: 4px; height: 7px; border: 1px solid #ff8c1a; border-right: 0; border-radius: 2px 0 0 2px;
`;
const ScrollBar = styled.div`
  height: ${(p) => p.$h}px; flex: none; background: #3b4046; display: flex; margin-left: 1px;
  i:first-child { width: 8px; background: #7f8a99; margin-right: ${(p) => p.$gap}px; }
  i:last-child { width: ${(p) => p.$w}px; background: #c3c7cf; }
`;
const TabRow = styled.div`height: 14px; flex: none; display: flex; background: #2c2c2e; align-items: center; color: #30343a;`;
const ForexTab = styled.div`
  width: 53px; height: 14px; margin-left: 7px; background: #7b879a; clip-path: polygon(0 0, 100% 0, 100% 100%, 9px 100%);
  font: 400 10.5px/14px ${VERD}; color: #14161a; padding-left: 16px; letter-spacing: -0.2px;
`;
const NavBox = styled.div`display: flex; gap: 9.5px; flex: none; padding-left: 5px;`;
const Nav = () => (
  <NavBox>
    {["M1 0v7M7 0L3 3.5L7 7z", "M6 0L2 3.5L6 7z", "M2 0L6 3.5L2 7z", "M7 0v7M1 0L5 3.5L1 7z"].map((d) => (
      <svg key={d} width={7} height={7} viewBox="0 0 8 7"><path d={d} fill="#7d8086" stroke="#7d8086" strokeWidth={0.8} /></svg>
    ))}
  </NavBox>
);

const radarTop = [["1", "SPY", "60 Min", "0.98"], ["2", "QQQ", "60 Min", "1.07"], ["3", "TSLA", "60 Min", "18.53"], ["4", "MSFT", "60 Min", "1.66"], ["5", "", "", ""]];
const radarLow = [
  ["SPY", "Monthly", "27."], ["SPY", "Weekly", "13."], ["SPY", "240 Min", "2."], ["SPY", "120 Min", "1."], ["SPY", "30 Min", "0."], ["QQQ", "Monthly", "20."], ["QQQ", "Weekly", "12."],
  ["QQQ", "Daily", "4."], ["QQQ", "240 Min", "2."], ["QQQ", "120 Min", "1."], ["QQQ", "30 Min", "0."], ["TSLA", "Monthly", "220."], ["TSLA", "Weekly", "160."], ["TSLA", "Daily", "95."],
  ["TSLA", "240 Min", "46."], ["TSLA", "120 Min", "25."], ["TSLA", "30 Min", "12."], ["NVDA", "Monthly", "47."],
];
function RadarPanel() {
  return (
    <Radar>
      <RadarWindow>
        <TitleRow>
          <svg width={13} height={13} viewBox="0 0 14 14"><circle cx={7} cy={7} r={6.5} fill="#0d6fa5" /><path d="M2 5Q7 1 12 6M2 9Q8 5 12 10M7 7L12 2M4 12L7 7" stroke="#57c8ef" fill="none" /><circle cx={7} cy={7} r={3} fill="none" stroke="#06324f" /></svg>
          <Fit w={60} ml={13} size={11} weight={500} family={UI}>RadarScre...</Fit>
          <LinkBtn $on $ml={20}>S<Caret $c="#043a04" /></LinkBtn>
          <LinkBtn $ml={6}>I<Caret $c="#fff" /></LinkBtn>
        </TitleRow>
        <ToolRow>
          <svg width={16} height={16} viewBox="0 0 16 16" fill="none" stroke="#8a8d92"><circle cx={8} cy={8} r={7} strokeWidth={1.5} /><path d="M8 8L4 5M8 8h4M8 1v2M8 13v2M1 8h2M13 8h2" /></svg>
          <Fit w={53} ml={2} size={11} weight={500} family={UI}>Timeframe</Fit>
          <Caret $ml={9} />
          <FlaskIcon width={16} height={16} viewBox="0 0 16 16"><path d="M5.5 1h5M6.5 1v5L1 14.5h14L9.5 6V1" fill="none" stroke="#8b99a8" strokeWidth={1.2} /><path d="M4.5 9.5h7L15 15H1z" fill="#1a80cc" /></FlaskIcon>
          <Fit w={38} ml={3} size={11} weight={500} family={UI}>Studies</Fit>
          <Caret $ml={9} />
        </ToolRow>
        <Grid $ml={2} $cols="16px 60px 54px 50px 20px" $head={34} $h={195}>
          <HeadCell /><HeadCell>Symbol<Sort /></HeadCell><HeadCell>Int</HeadCell><HeadCell>ATR</HeadCell><HeadCell />
          {radarTop.map(([n, s, i, a], k) => (
            <React.Fragment key={n}>
              <IndexCell>{n}</IndexCell>
              <Cell $bar="#555b66" $box={k === 1} $hot={k === 1}>{s}{k === 0 && <Corner />}</Cell>
              <Cell $a="center">{i}</Cell><Cell $a="right">{a}</Cell><Cell />
            </React.Fragment>
          ))}
        </Grid>
        <ScrollBar $h={8} $gap={23} $w={93}><i /><i /></ScrollBar>
        <TabRow><Nav /><ForexTab>Forex</ForexTab></TabRow>
      </RadarWindow>
      <Grid $ml={2} $cols="16px 60px 80px 60px" $head={25} $h={336}>
        <HeadCell $pb={9} /><HeadCell $on $pb={9}>Symbol</HeadCell><HeadCell $pb={9}>Int</HeadCell><HeadCell $pb={9} $pl={11}>ATR</HeadCell>
        {radarLow.map(([s, i, a], k) => (
          <React.Fragment key={k}>
            <IndexCell>{k + 1}</IndexCell>
            <Cell $bar="#f0f0f0" $line={k < 2 ? "#8d9096" : k === 17 && "#f0f0f0"} $hot={k === 4}>{s}{k > 1 && k < 5 && <Corner />}</Cell>
            <Cell $a="center" $pr={7} $line={k < 2 && "#8d9096"}>{i}</Cell><Cell $a="right" $pr={31} $line={k < 2 && "#8d9096"}>{a}</Cell>
          </React.Fragment>
        ))}
      </Grid>
      <ScrollBar $h={7} $gap={16} $w={32}><i /><i /></ScrollBar>
    </Radar>
  );
}

/* ---------- status bar ---------- */
const Status = styled.footer`height: 33px; flex: none; background: #15161b; display: flex; align-items: flex-start; padding-top: 3px; color: #c4c4c4;`;
const NavWrap = styled.div`width: 62px; height: 24px; display: flex; align-items: center; margin-left: -3px; flex: none;`;
const Tabs = styled.div`display: flex; width: 386px; margin-left: 3px; flex: none;`;
const TabA = styled.div`
  width: 203px; height: 24px; border: 1px solid #868b93; border-left: 0; position: relative; padding-left: 16px; color: #777b82; display: flex; align-items: center;
  svg { position: absolute; left: 0; top: -1px; }
`;
const TabB = styled.div`width: 162px; height: 24px; background: #76839a; clip-path: polygon(0 0, 100% 0, 100% 100%, 11px 100%); padding-left: 11px; display: flex; align-items: center; color: #101215;`;
const TabPlus = styled.div`width: 19px; height: 20px; margin: 2px 0 0 1px; background: #2a2f38; color: #a9bfdc; font: 12px/20px ${SANS}; text-align: center;`;
const Stat = styled.div`width: ${(p) => p.$w}px; flex: none; margin-left: ${(p) => p.$ml}px; height: 26px; display: flex; align-items: center; gap: 2px; color: #c9c9c9;`;
const Two = styled.div`
  display: flex; flex-direction: column; align-items: ${(p) => p.$a || "flex-end"}; color: #74767a; span { line-height: 11px; }
`;
const Dot = styled.i`width: 12px; height: 12px; border-radius: 50%; background: #0a0aff; flex: none;`;
const U = (p) => <Fit family={UI} {...p} />;
function StatusBar() {
  return (
    <Status>
      <NavWrap><Nav /></NavWrap>
      <Tabs>
        <TabA>
          <svg width={12} height={24}><rect width={12} height={24} fill="#15161b" /><path d="M0.5 0.5L10.5 23.5H12M0 .5H12" fill="none" stroke="#868b93" /></svg>
          <U w={180} size={10.5} family={SANS}>WorkspaceINDICADORES_MERCADO</U>
        </TabA>
        <TabB><U w={143} size={10.5} family={SANS}>SegundoWorkspace-Baudelio</U></TabB>
        <TabPlus>+</TabPlus>
      </Tabs>
      <Stat $ml={103} $w={104}><U w={104} size={15}>SIM1323263M</U></Stat>
      <Stat $ml={28} $w={51}><Two><U w={25} size={9.5}>Open</U><U w={39} size={9.5}>Positions</U></Two><U w={9} size={15}>2</U></Stat>
      <Stat $ml={23} $w={100}><Two><U w={31} size={9.5}>Buying</U><U w={28} size={9.5}>Power</U></Two><U w={66} size={15}>$118,156</U></Stat>
      <Stat $ml={56} $w={55}><Two><U w={25} size={9.5}>Open</U><U w={14} size={9.5}>P/L</U></Two><U w={27} size={15}>$25</U></Stat>
      <Stat $ml={65} $w={51}><Two><U w={29} size={9.5}>Closed</U><U w={14} size={9.5}>P/L</U></Two><U w={18} size={15}>$0</U></Stat>
      <Stat $ml={73} $w={40}><U w={18} size={15}>05</U><Two $a="flex-start"><U w={18} size={9.5}>Aug</U><U w={20} size={9.5}>2020</U></Two></Stat>
      <Stat $ml={9} $w={57}><U w={39} size={15}>03:55</U><Two $a="flex-start"><U w={10} size={9}>56</U><U w={14} size={9.5}>PM</U></Two></Stat>
      <Stat $ml={14} $w={60}><U w={18} size={11} c="#74767a">Sim</U><Dot /><U w={26} ml={4} size={11} c="#74767a">Data</U></Stat>
    </Status>
  );
}

/* ---------- task bar ---------- */
const Task = styled.div`height: 37px; flex: none; display: flex; background: linear-gradient(90deg, #dfe0e2, #dedddb 50%, #d6d7d8); color: #111;`;
const Start = styled.div`width: 43px; flex: none; display: flex; align-items: center; padding: 3px 0 0 9px;`;
const Search = styled.div`width: 342px; flex: none; background: #fff; display: flex; align-items: center; padding: 3px 0 0 11px; color: #2a2a2a;`;
const Slot = styled.div`
  width: ${(p) => p.$w || 49.25}px; flex: none; display: flex; align-items: center; justify-content: center; padding: 2px 0 0 ${(p) => p.$pl || 0}px; background: ${(p) => (p.$on ? "#f1f1f1" : "none")};
`;
const Clock = styled.div`width: 62px; flex: none; display: flex; flex-direction: column; align-items: center; justify-content: center; padding-top: 2px; span { line-height: 18px; }`;
const Tray = styled.div`display: flex; margin-left: 83px; flex: none;`;
const S = ({ children, s = 24 }) => <svg width={s} height={s} viewBox="0 0 24 24">{children}</svg>;
const T = ({ x, y, f, s, children }) => <text x={x} y={y} fontSize={s} fontWeight={700} fill={f} fontFamily={SANS} textAnchor="middle">{children}</text>;
function TaskBar() {
  return (
    <Task>
      <Start><svg width={17} height={17} viewBox="0 0 17 17"><path d="M0 2.5L7 1.5V8H0zM8 1.3L17 0v8H8zM0 9h7v6.5L0 14.5zM8 9h9v8L8 15.7z" fill="#111" /></svg></Start>
      <Search>
        <svg width={17} height={18} viewBox="0 0 17 18"><circle cx={10.5} cy={6.5} r={5.5} fill="none" stroke="#222" strokeWidth={1.3} /><path d="M6.5 10.5L1 17" stroke="#222" strokeWidth={1.4} /></svg>
        <Fit w={161} ml={11} size={14} family={UI}>Escribe aquí para buscar</Fit>
      </Search>
      <Slot><svg width={17} height={17} viewBox="0 0 17 17" fill="none" stroke="#222" strokeWidth={1.3}><path d="M1 0v3.5h11V0M1 17v-3.5h11V17M1 6h11v5H1zM15.5 0v17" /><path d="M14 5h3v3h-3z" fill="#222" stroke="none" /></svg></Slot>
      <Slot $pl={2}><svg width={23} height={21} viewBox="0 0 23 21"><rect width={23} height={21} fill="#a9acae" /><rect x={1} y={2.5} width={21} height={17.5} fill="#050505" /><text x={2.5} y={9.5} fontSize={5.5} fill="#eee" fontFamily="Liberation Mono, monospace">C:\_</text></svg></Slot>
      <Slot $pl={3}><S><path d="M7 2.500L18 2L13 19L2 18z" fill="#7dbfcd" stroke="#9fb4b8" strokeWidth={0.8} /><path d="M7 2.500L18 2L16 9L5 9z" fill="#a9dbe3" /><path d="M2 18L13 19L18 21L6 20z" fill="#ded9c8" /><path d="M13 19L18 2L23 19L18 22z" fill="#55636a" /><path d="M13 19L18 4L18 22z" fill="#d8e0e0" /></S></Slot>
      <Slot $pl={2}><S><path d="M4 1h18v22H1.500V3z" fill="#f3f8f1" stroke="#3f9950" strokeWidth={1.4} /><path d="M13 6h8M14 10h7M13 14h8" stroke="#a6d3a8" strokeWidth={1.5} /><path d="M2 3.500L15 2.500V17L2 18.500z" fill="#e2f1dd" /><path d="M5 4.500L13.500 17M13 4L5 16.500" stroke="#23883a" strokeWidth={3.4} /><path d="M13 13h8v9h-3l-5-3z" fill="#fff" stroke="#7fb886" strokeWidth={0.8} /><path d="M14 14l6 7" stroke="#4fa65a" strokeWidth={1.5} /></S></Slot>
      <Slot $pl={2}><S><path d="M0.500 3.500h9v4h-9z" fill="#d99a15" /><path d="M1 6h10l2-2h10v17H1z" fill="#f9cf62" /><path d="M1 8h22v4H1z" fill="#fddb7d" /><path d="M4.500 23v-7q0-1.500 1.500-1.500h12q1.500 0 1.500 1.500v7h-4v-4.500H8.500V23z" fill="#3291d4" /></S></Slot>
      <Slot $pl={2}><S><path d="M4 1h18v22H1.500V3z" fill="#f3f6fc" stroke="#3a62a8" strokeWidth={1.4} /><path d="M17 5h4M17 8h4M17 11h4" stroke="#8ea9d6" strokeWidth={1.3} /><path d="M2 3.500L16 2.500V15L2 16.500z" fill="#dfe8f7" /><path d="M3.500 5L6.500 14.500L10 6L12.500 14.500L16.500 4.500" fill="none" stroke="#2455a8" strokeWidth={2.8} /><path d="M5 20h7M13 15h7v6h-7z" fill="#fff" stroke="#7f9fd0" /></S></Slot>
      <Slot $pl={2}><S><path d="M3 10Q9 1 18 5Q23 12 18 18Q9 24 6 19Q8 16 4 16Q0 15 3 10z" fill="#bcd8ec" stroke="#86a9c2" strokeWidth={0.8} /><circle cx={5} cy={13.500} r={2.300} fill="#d83c34" /><circle cx={8} cy={9} r={2.300} fill="#e8b52a" /><circle cx={13} cy={7} r={2.300} fill="#4fae4a" /><circle cx={16.500} cy={14} r={2.300} fill="#3d8bd4" /><path d="M20 3L13 23" stroke="#c9873f" strokeWidth={2} /><path d="M19 1q3-2 4 1q0 3-4 5z" fill="#b5763c" /></S></Slot>
      <Slot><S><circle cx={12} cy={12} r={11} fill="#f9cd1c" /><path d="M12 12L2.500 6.500A11 11 0 0 1 21.500 6.500H12z" fill="#dd4b3e" /><path d="M12 12L2.500 6.500A11 11 0 0 0 11 23L16 14z" fill="#1ea362" /><circle cx={12} cy={12} r={5.300} fill="#fff" /><circle cx={12} cy={12} r={4.300} fill="#4486ee" /></S></Slot>
      <Slot><S s={25}><rect width={24} height={24} rx={1.500} fill="#3a83bd" /><path d="M0 14L24 10V24H0z" fill="#2a6faa" /><path d="M18.500 5.500H10L6.500 8V12H14L16.500 13.500V16L14 18.300H5.500" fill="none" stroke="#fff" strokeWidth={3.400} /></S></Slot>
      <Slot><S><rect x={3} y={0} width={18} height={24} fill="#5c6468" /><rect x={5} y={2} width={14} height={5} fill="#46d5f2" />{[9, 14, 19].map((y) => [5, 10, 15].map((x) => <rect key={x + y * 50} x={x} y={y} width={4} height={3.8} fill={x === 15 && y > 9 ? "#123d7c" : "#d9dcde"} />))}</S></Slot>
      <Slot><S><circle cx={13} cy={12} r={10.500} fill="#191452" /><path d="M9 2.200A10.500 10.500 0 0 0 9 21.800A14 14 0 0 1 9 2.200z" fill="#b48ad0" stroke="#b48ad0" /><path d="M3 10.300h20M3 13.300h20" stroke="#b3b6e6" strokeWidth={1.200} /></S></Slot>
      <Slot $pl={2}><S s={26}><rect width={22} height={22} fill="#ff7a0f" /><path d="M6 14Q8 8 13 7Q15 3 18 4Q20 7 17 9Q16 13 10 16zM7 11l-3 1M12 15l-1 4M4 17l3-2M5 20l4-3M11 9l3 3" stroke="#fff" fill="none" strokeWidth={1.200} /><circle cx={16.500} cy={17} r={6.800} fill="#3f97bd" stroke="#e7eef2" /><text x={16.500} y={21} fontSize={11} fill="#fff" fontFamily={UI} textAnchor="middle">5</text></S></Slot>
      <Slot $on><S s={25}><path d="M0 1H11Q10 5 7 6H2Q0 5 0 1z" fill="#1592c4" /><path d="M12 1H23Q23 6 18 6Q14 6 12 10Q10 14 14 15Q15 17 9 24Q9 19 8 16Q5 12 8 7Q10 5 12 1z" fill="#17b0bd" /><path d="M13 8Q14 11 18 10Q19 16 9 24Q14 16 12 13Q11 10 13 8z" fill="#173f86" /><path d="M7 6Q5 12 8 16L10 8z" fill="#1a5fa0" /></S></Slot>
      <Tray>
        <Slot $w={34}><svg width={22} height={22} viewBox="0 0 22 22"><circle cx={11} cy={11} r={9.5} fill="#1a98e0" stroke="#f5f9fc" strokeWidth={1.5} /><T x={11} y={16} f="#fff" s={14}>?</T></svg></Slot>
        <Slot $w={34}><svg width={13} height={8} viewBox="0 0 13 8"><path d="M1 7L6.5 1.5L12 7" fill="none" stroke="#222" strokeWidth={1.4} /></svg></Slot>
        <Slot $w={28}><svg width={18} height={14} viewBox="0 0 18 14" fill="none" stroke="#222"><path d="M1 5h3l4-4v12l-4-4H1z" /><path d="M10 5q1.5 2 0 4M12 3q3 4 0 8" /><path d="M14.5 1q4 6 0 12" stroke="#999" /></svg></Slot>
        <Slot $w={40}><Fit w={18} size={11} family={UI}>ESP</Fit></Slot>
        <Clock><Fit w={43} size={11.5} family={UI}>3:55 PM</Fit><Fit w={46} size={11.5} family={UI}>8/5/2020</Fit></Clock>
        <Slot $w={36}><svg width={16} height={16} viewBox="0 0 16 16"><path d="M0 1h16v11H8l-3 4v-4H0z" fill="#111" /><path d="M3 4h12M3 6.5h12M3 9h12" stroke="#ddd" /></svg></Slot>
      </Tray>
    </Task>
  );
}

export default function App() {
  return (
    <Screen>
      <Global />
      <MenuBar>
        <U w={26} ml={3} size={10.5}>Apps</U>
        <U w={29} ml={79} size={10.5}>Trade</U>
        <U w={78} ml={76} size={10.5}>Position Graph</U>
      </MenuBar>
      <Desk>
        <LeftEdge $w={5} />
        <Column $w={528}><Daily /><Weekly /></Column>
        <Rail $w={4} />
        <Column $w={604}><Hourly /><FourHour /></Column>
        <Rail $w={1} />
        <RadarPanel />
      </Desk>
      <StatusBar />
      <TaskBar />
    </Screen>
  );
}
